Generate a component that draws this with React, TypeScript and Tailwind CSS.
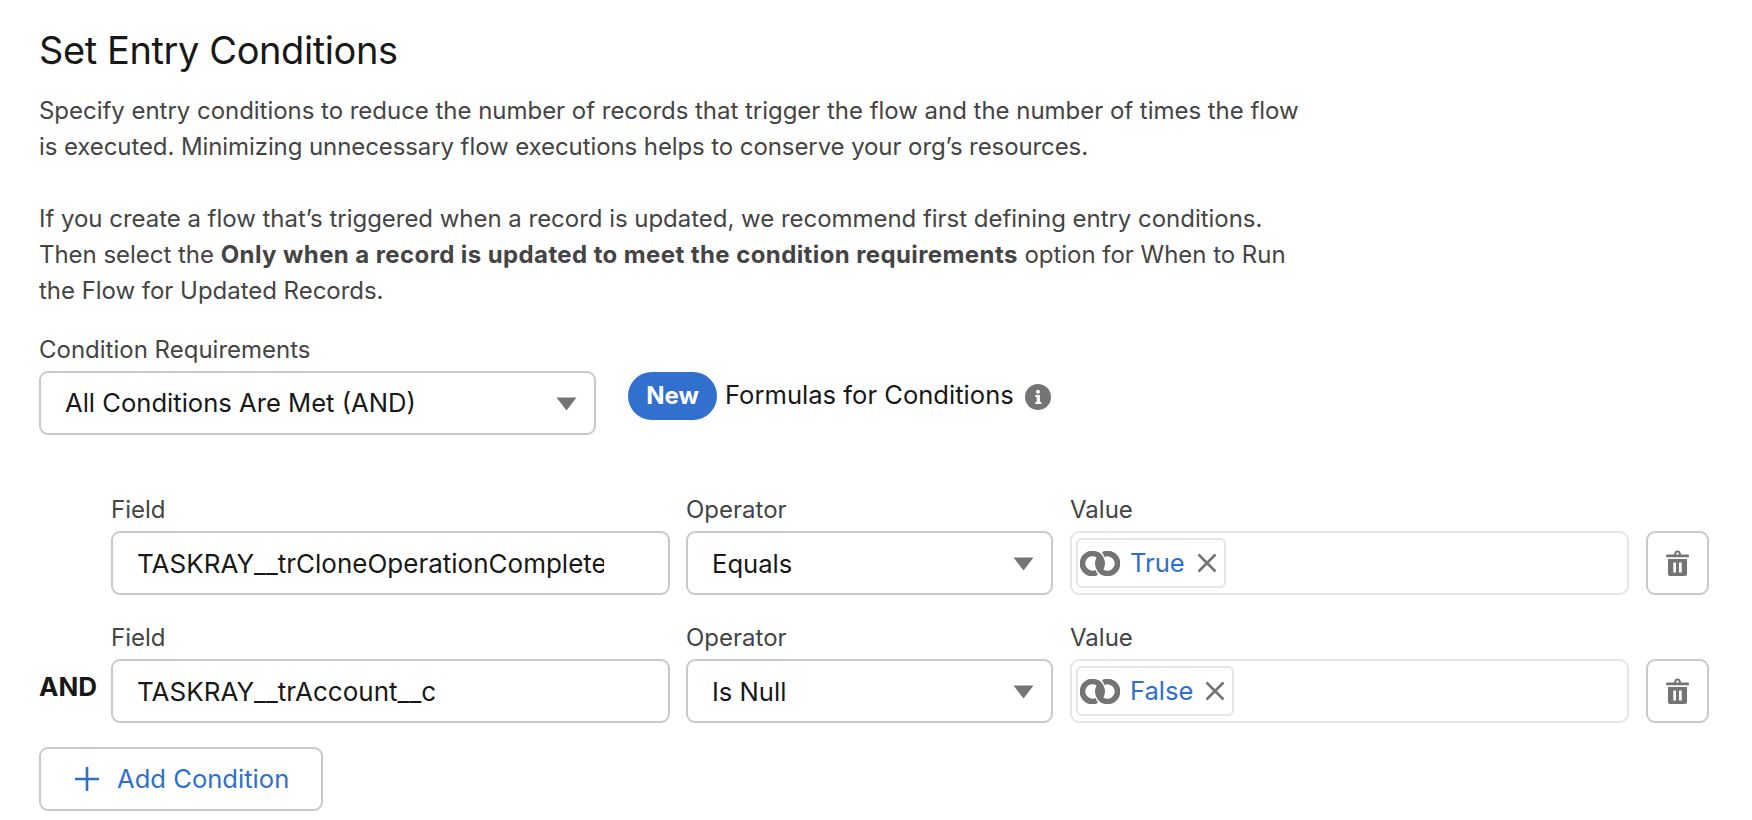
import React from "react";

const font = "font-['Inter','Liberation_Sans',sans-serif]";

function Caret() {
    return (
        <svg width="21" height="14" viewBox="0 0 21 14" className="absolute right-[17px] top-1/2 -translate-y-1/2 mt-px">
            <path d="M0.5 0.5h20L10.5 13.5z" fill="#747474" />
        </svg>
    );
}

function LinkIcon() {
    return (
        <svg width="40" height="25" viewBox="0 0 40 25" fill="none" className="shrink-0">
            <path d="M20.160 6.070A10 10 0 1 0 16.730 21.560" stroke="#747474" strokeWidth="5.600" />
            <path d="M19.840 18.930A10 10 0 1 0 23.270 3.440" stroke="#747474" strokeWidth="5.600" />
            <path d="M20 2.500A12.500 12.500 0 0 0 20 22.500A12.500 12.500 0 0 0 20 2.500z" fill="#747474" />
        </svg>
    );
}

function CloseIcon() {
    return (
        <svg width="20" height="20" viewBox="0 0 20 20" fill="none" className="shrink-0">
            <path d="M1.5 1.5l17 17M18.5 1.5l-17 17" stroke="#747474" strokeWidth="2.6" />
        </svg>
    );
}

function TrashIcon() {
    return (
        <svg width="23" height="26" viewBox="0 0 23 26" fill="#747474">
            <path d="M8 5C8 1.8 9.4.5 11.5.5S15 1.8 15 5h-1.9c0-1.6-.6-2.6-1.6-2.6S9.900 3.400 9.900 5z" />
            <rect x="0" y="4.600" width="23" height="2.600" rx="1" />
            <path fillRule="evenodd" d="M2 9h19v15a2 2 0 0 1-2 2H4a2 2 0 0 1-2-2zM7.300 12.500v10h2.700v-10zM13 12.500v10h2.700v-10z" />
        </svg>
    );
}

function InfoIcon() {
    return (
        <svg width="26" height="26" viewBox="0 0 26 26" className="ml-[11px] mt-[13px] shrink-0">
            <circle cx="13" cy="13" r="13" fill="#747474" />
            <circle cx="13" cy="7.800" r="2" fill="white" />
            <path d="M10.300 11h4.700v7h1.300v2h-6v-2h1.400v-5h-1.400z" fill="white" />
        </svg>
    );
}

function Chip({ label }: { label: string }) {
    return (
        <div className="flex items-center h-[50px] ml-[4px] pl-[2px] pr-[7px] border-2 border-[#e5e5e5] rounded-[6px]">
            <LinkIcon />
            <span className="ml-[10px] mr-[12px] text-[25.6px] text-[#2e6fce]">{label}</span>
            <CloseIcon />
        </div>
    );
}

function ConditionRow({
    logic,
    field,
    operator,
    value,
}: {
    logic?: string;
    field: string;
    operator: string;
    value: string;
}) {
    return (
        <div className="flex items-end">
            <div className="w-[72px] h-[64px] text-[26px] font-bold text-[#181818] leading-[56px]">{logic}</div>
            <div className="w-[559px] mr-[16px]">
                <div className="text-[24px] leading-[28px] text-[#444444] mb-[7px]">Field</div>
                <div className="h-[64px] border-2 border-[#c9c9c9] rounded-[9px] pl-[24px] pr-[64px] flex items-center text-[26px] text-[#181818]">
                    <span className="block overflow-hidden whitespace-nowrap">{field}</span>
                </div>
            </div>
            <div className="w-[367px] mr-[17px]">
                <div className="text-[24px] leading-[28px] text-[#444444] mb-[7px]">Operator</div>
                <div className="relative h-[64px] border-2 border-[#c9c9c9] rounded-[9px] pl-[24px] pt-[2px] flex items-center text-[25.6px] text-[#181818]">
                    {operator}
                    <Caret />
                </div>
            </div>
            <div className="w-[559px] mr-[17px]">
                <div className="text-[24px] leading-[28px] text-[#444444] mb-[7px]">Value</div>
                <div className="h-[64px] border-2 border-[#e5e5e5] rounded-[9px] flex items-center">
                    <Chip label={value} />
                </div>
            </div>
            <div className="w-[63px] h-[64px] border-2 border-[#c9c9c9] rounded-[9px] flex items-center justify-center">
                <TrashIcon />
            </div>
        </div>
    );
}

export default function App() {
    return (
        <div className={`${font} w-[1752px] h-[820px] overflow-hidden bg-white px-[39px] pt-[24px]`}>
            <h1 className="text-[38px] leading-[52px] tracking-[-0.4px] text-[#181818]">Set Entry Conditions</h1>
            <div className="mt-[17px] text-[24px] leading-[36px] tracking-[-0.03px] text-[#444444] w-[1300px]">
                <p>
                    Specify entry conditions to reduce the number of records that trigger the flow and the number of times the flow
                    <br />
                    <span className="tracking-[-0.09px]">is executed. Minimizing unnecessary flow executions helps to conserve your org’s resources.</span>
                </p>
                <p className="mt-[36px]">
                    If you create a flow that’s triggered when a record is updated, we recommend first defining entry conditions.
                    <br />
                    Then select the <b className="tracking-[0.4px]">Only when a record is updated to meet the condition requirements</b> option for When to Run
                    <br />
                    the Flow for Updated Records.
                </p>
            </div>
            <div className="mt-[27px] text-[24px] leading-[28px] text-[#444444]">Condition Requirements</div>
            <div className="mt-[7px] flex items-start">
                <div className="relative w-[557px] h-[64px] border-2 border-[#c9c9c9] rounded-[9px] pl-[24px] flex items-center text-[25.6px] text-[#181818]">
                    All Conditions Are Met (AND)
                    <Caret />
                </div>
                <div className="ml-[32px] mt-[1px] w-[89px] h-[48px] rounded-full bg-[#3170ce] text-white font-bold text-[24px] flex items-center justify-center">
                    New
                </div>
                <div className="ml-[8px] h-[48px] flex items-center text-[25.6px] text-[#181818]">Formulas for Conditions</div>
                <InfoIcon />
            </div>
            <div className="mt-[61px] flex flex-col gap-[29px]">
                <ConditionRow field="TASKRAY__trCloneOperationComplete__c" operator="Equals" value="True" />
                <ConditionRow logic="AND" field="TASKRAY__trAccount__c" operator="Is Null" value="False" />
            </div>
            <div className="mt-[24px] w-[284px] h-[64px] border-2 border-[#c9c9c9] rounded-[9px] flex items-center pl-[34px] gap-[18px] text-[25.6px] text-[#2e6fce]">
                <svg width="24" height="24" viewBox="0 0 24 24" fill="none">
                    <path d="M12 0v24M0 12h24" stroke="#2e6fce" strokeWidth="2.600" />
                </svg>
                Add Condition
            </div>
        </div>
    );
}
